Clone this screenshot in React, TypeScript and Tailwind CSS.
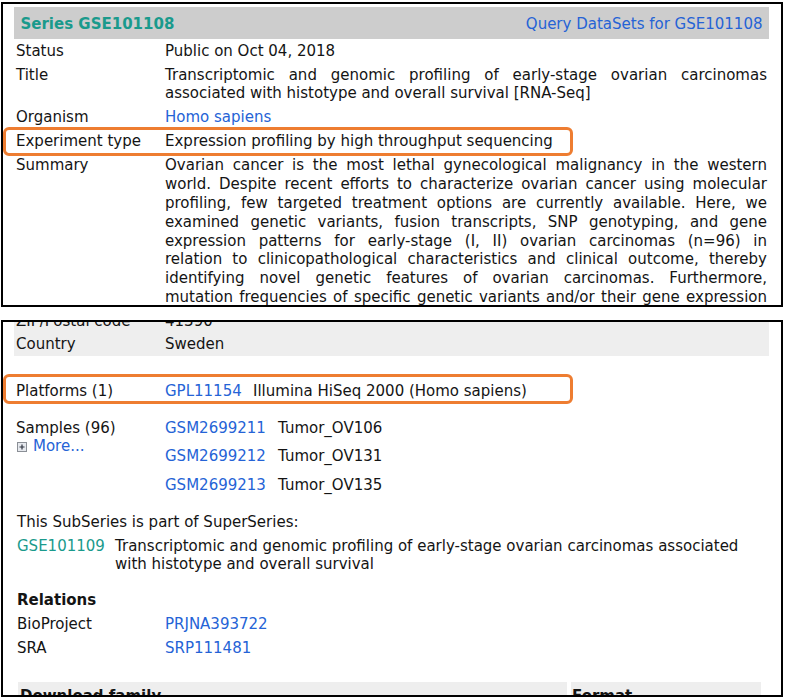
import React from "react";

const LINK = "text-[#2563d6]";
const TEAL = "text-[#1a9a8c]";

const titleLines = [
  "Transcriptomic and genomic profiling of early-stage ovarian carcinomas",
  "associated with histotype and overall survival [RNA-Seq]",
];

const summaryLines = [
  "Ovarian cancer is the most lethal gynecological malignancy in the western",
  "world. Despite recent efforts to characterize ovarian cancer using molecular",
  "profiling, few targeted treatment options are currently available. Here, we",
  "examined genetic variants, fusion transcripts, SNP genotyping, and gene",
  "expression patterns for early-stage (I, II) ovarian carcinomas (n=96) in",
  "relation to clinicopathological characteristics and clinical outcome, thereby",
  "identifying novel genetic features of ovarian carcinomas. Furthermore,",
  "mutation frequencies of specific genetic variants and/or their gene expression",
  "patterns were associated with histotype and overall survival.",
];

const samples = [
  { id: "GSM2699211", name: "Tumor_OV106" },
  { id: "GSM2699212", name: "Tumor_OV131" },
  { id: "GSM2699213", name: "Tumor_OV135" },
];

// justified block, each line kept as in the source page
function Justified({ lines, lastFull }: { lines: string[]; lastFull?: boolean }) {
  return (
    <div>
      {lines.map((line, i) => {
        const justify = i < lines.length - 1 || lastFull;
        return (
          <div
            key={i}
            className={justify ? "text-justify [text-align-last:justify]" : "text-left"}
          >
            {line}
          </div>
        );
      })}
    </div>
  );
}

function Row({ label, children }: { label: string; children: React.ReactNode }) {
  return (
    <div className="grid grid-cols-[149px_1fr] py-[2.6px]">
      <div className="pl-[2px]">{label}</div>
      <div className="pl-[2px] pr-[2px]">{children}</div>
    </div>
  );
}

function PlusBox() {
  return (
    <svg width="10" height="10" viewBox="0 0 10 10" className="shrink-0">
      <rect x="0.5" y="0.5" width="9" height="9" fill="#e6e9ee" stroke="#8b8f96" />
      <path d="M2.5 5h5M5 2.5v5" stroke="#2f3440" strokeWidth="1.2" />
    </svg>
  );
}

export default function App() {
  return (
    <div className="relative w-[785px] h-[697px] overflow-hidden bg-white font-['DejaVu_Sans',Verdana,sans-serif] text-[15px] leading-[18.8px] text-[#141414]">
      {/* Series panel */}
      <div className="ml-[1px] mt-[2px] h-[305px] w-[782px] overflow-hidden border-2 border-black pl-[11px] pr-[12px] pt-[3px]">
        <div className="flex h-[32px] items-center justify-between bg-[#cdcdcd] px-[6.5px] pt-[2px]">
          <span className={`font-bold ${TEAL}`}>Series GSE101108</span>
          <span className={LINK}>Query DataSets for GSE101108</span>
        </div>
        <Row label="Status">Public on Oct 04, 2018</Row>
        <Row label="Title">
          <Justified lines={titleLines} />
        </Row>
        <Row label="Organism">
          <span className={LINK}>Homo sapiens</span>
        </Row>
        <Row label="Experiment type">Expression profiling by high throughput sequencing</Row>
        <Row label="Summary">
          <Justified lines={summaryLines} />
        </Row>
      </div>

      {/* Contributors / platforms panel */}
      <div className="ml-[1px] mt-[13px] h-[377px] w-[782px] overflow-hidden border-2 border-black pl-[11px] pr-[12px]">
        <div className="-mt-[12.5px] bg-[#eeeeee]">
          <div className="grid h-[23px] grid-cols-[149px_1fr] items-center">
            <div className="pl-[2px]">ZIP/Postal code</div>
            <div className="pl-[2px]">41390</div>
          </div>
          <div className="grid h-[23px] grid-cols-[149px_1fr] items-center">
            <div className="pl-[2px]">Country</div>
            <div className="pl-[2px]">Sweden</div>
          </div>
        </div>

        <div className="mt-[24px] grid h-[24px] grid-cols-[149px_1fr] items-center">
          <div className="pl-[2px]">Platforms (1)</div>
          <div className="flex pl-[2px]">
            <span className={`w-[88px] ${LINK}`}>GPL11154</span>
            <span>Illumina HiSeq 2000 (Homo sapiens)</span>
          </div>
        </div>

        <div className="mt-[15px] grid grid-cols-[149px_1fr]">
          <div className="pl-[2px]">
            <div>Samples (96)</div>
            <div className="flex items-center gap-[6px] pl-[1px]">
              <PlusBox />
              <span className={LINK}>More...</span>
            </div>
          </div>
          <div className="flex flex-col gap-[10.2px] pl-[2px]">
            {samples.map((s) => (
              <div key={s.id} className="flex">
                <span className={`w-[113px] ${LINK}`}>{s.id}</span>
                <span>{s.name}</span>
              </div>
            ))}
          </div>
        </div>

        <div className="mt-[17.3px] pl-[3px]">This SubSeries is part of SuperSeries:</div>
        <div className="mt-[5.2px] flex pl-[3px]">
          <span className={`w-[98px] shrink-0 ${TEAL}`}>GSE101109</span>
          <span className="w-[630px]">
            Transcriptomic and genomic profiling of early-stage ovarian carcinomas associated
            <br />
            with histotype and overall survival
          </span>
        </div>

        <div className="mt-[14px] flex h-[24px] items-center pl-[3px] pt-[1px] font-bold">Relations</div>
        <div className="grid h-[24px] grid-cols-[149px_1fr] items-center pt-[1px]">
          <div className="pl-[3px]">BioProject</div>
          <div className={`pl-[2px] ${LINK}`}>PRJNA393722</div>
        </div>
        <div className="grid h-[24px] grid-cols-[149px_1fr] items-center pt-[1px]">
          <div className="pl-[3px]">SRA</div>
          <div className={`pl-[2px] ${LINK}`}>SRP111481</div>
        </div>

        <div className="mt-[21.8px] flex gap-[4px] pl-[4px]">
          <div className="h-[30px] w-[549px] bg-[#eeeeee] pl-[2px] pt-[5px] font-bold">Download family</div>
          <div className="h-[30px] w-[190px] bg-[#eeeeee] pl-[1px] pt-[5px] font-bold">Format</div>
        </div>
      </div>

      {/* highlight annotations */}
      <div className="absolute left-[2.5px] top-[126.5px] h-[29.5px] w-[570px] rounded-[6px] border-[3px] border-[#ee7d31]" />
      <div className="absolute left-[2.5px] top-[374px] h-[30px] w-[570px] rounded-[6px] border-[3px] border-[#ee7d31]" />
    </div>
  );
}
